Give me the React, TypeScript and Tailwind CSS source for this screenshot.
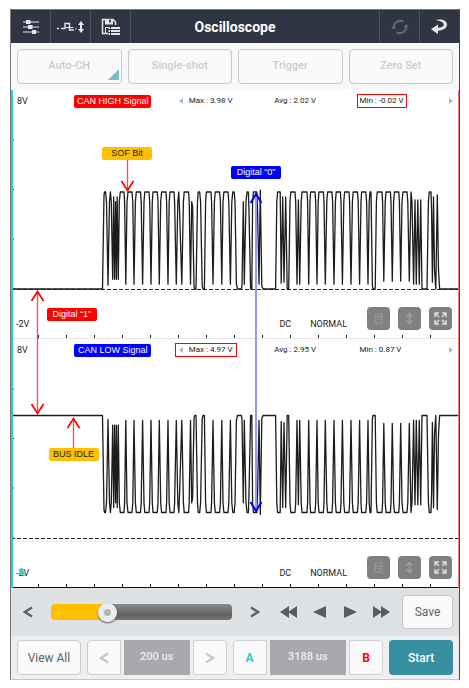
import { useState } from 'react'
import type { ReactNode } from 'react'

type Reading = { text: string; boxed?: boolean }

type Channel = {
  id: string
  name: string
  nameClass: string
  max: Reading
  avg: Reading
  min: Reading
  idleY: number
  swing: number
  marker?: string
}

const channels: Channel[] = [
  {
    id: 'high',
    name: 'CAN HIGH Signal',
    nameClass: 'bg-[#ff0000]',
    max: { text: 'Max : 3.98 V' },
    avg: { text: 'Avg : 2.02 V' },
    min: { text: 'Min : -0.02 V', boxed: true },
    idleY: 199,
    swing: -97,
  },
  {
    id: 'low',
    name: 'CAN LOW Signal',
    nameClass: 'bg-[#0000ff]',
    max: { text: 'Max : 4.97 V', boxed: true },
    avg: { text: 'Avg : 2.95 V' },
    min: { text: 'Min : 0.87 V' },
    idleY: 76.5,
    swing: 97,
    marker: 'A',
  },
]

// Bus frame as [x, level]; level 0 is recessive, 1 is dominant
const frame: [number, number][] = [
  [0, 0], [91.5, 0], [93, 0.97], [93.5, 1], [94.5, 1], [95.5, 0.9], [97, 0.04], [98.5, 0.9], [99.4, 1], [100.3, 0.9],
  [101.7, 0.1], [102.7, 0.95], [103.6, 0.1], [104.6, 0.9], [105.4, 0.1], [106.2, 0.95], [107.3, 0.1],
  [108.3, 0.9], [109.3, 1], [113, 1], [113.6, 0.9], [114.8, 0.05],
  [116, 0.9], [117, 1], [121, 1], [121.8, 0.9], [123, 0.05],
  [124.4, 0.9], [125.3, 1], [129.5, 1], [130.2, 0.9], [131.6, 0.05],
  [133, 0.9], [133.8, 1], [138, 1], [138.7, 0.9], [140, 0.05],
  [141.3, 0.9], [142, 1], [146.3, 1], [147, 0.9], [148.3, 0.05],
  [149.7, 0.9], [150.6, 1], [155, 1], [155.6, 0.9], [157, 0.05],
  [158.2, 0.9], [159, 1], [163, 1], [163.6, 0.9], [165.3, 0.05],
  [166.8, 0.9], [167.8, 1], [168.6, 0.8], [170.8, 0.05],
  [172.4, 0.9], [173.2, 1], [177.6, 1], [178.2, 0.9], [179.5, 0.05], [180.7, 0.9], [181.6, 0.85], [183, 0.03], [183.7, 0], [185, 0],
  [186.5, 0.9], [187.2, 1], [188.7, 1], [189.6, 0.9], [191.2, 0.03], [192, 0], [193.4, 0],
  [194.6, 0.9], [195.4, 1], [200, 1], [200.6, 0.9], [202, 0.05],
  [203.4, 0.9], [204.3, 1], [208.6, 1], [209.4, 0.9], [210.8, 0.05],
  [212, 0.9], [212.9, 1], [217, 1], [217.8, 0.9], [219.4, 0.05],
  [220.8, 0.9], [221.8, 1], [223.2, 1], [224, 0.9], [225.4, 0.05], [226.5, 0], [230.4, 0], [231, 0.04],
  [232.3, 0.9], [233.3, 0.05], [235, 0.9], [236, 1], [237.4, 1], [238, 0.8], [239.6, 0], [240.8, 0],
  [241.6, 0.9], [242.4, 1], [245.8, 1], [246.6, 0.8], [248, 0.05], [249.3, 1.02], [250.8, 0.03], [252, 0],
  [264.6, 0], [265.8, 0.9], [266.6, 1], [269.2, 1], [270.2, 0.06], [271.7, 0.95], [273, 0.07], [274.7, 0.95], [276.2, 0], [277.7, 0],
  [279, 0.9], [279.8, 1], [284, 1], [284.7, 0.9], [286, 0.05], [287.4, 0.92], [288.7, 0.05],
  [290.2, 0.9], [291, 1], [296, 1], [296.6, 0.9], [297.7, 0.05],
  [299, 0.9], [299.6, 1], [304, 1], [304.7, 0.9], [306, 0.05],
  [307.2, 0.9], [308, 1], [312.4, 1], [313, 0.9], [314.3, 0.05],
  [315.8, 0.9], [316.6, 1], [321, 1], [321.6, 0.9], [323, 0.05],
  [324.4, 0.9], [325.2, 1], [329.4, 1], [330, 0.9], [331.4, 0.05],
  [332.8, 0.9], [333.6, 1], [338, 1], [338.6, 0.9], [340, 0.05],
  [341.4, 0.9], [342.2, 1], [346.4, 1], [347.2, 0.9], [348.6, 0.05],
  [350, 0.9], [350.6, 1], [354.8, 1], [355.6, 0.9], [357, 0.05],
  [358.2, 0.9], [359, 1], [360, 1], [361.4, 0.03], [362, 0], [364.2, 0],
  [365.4, 0.9], [366.2, 1], [371, 1], [371.6, 0.9], [372.8, 0.08],
  [374.2, 0.9], [375, 1], [379.4, 1], [380, 0.9], [381.3, 0.08],
  [382.6, 0.9], [383.4, 1], [387.8, 1], [388.4, 0.9], [389.7, 0.08],
  [391, 0.9], [392, 1], [396, 1], [396.8, 0.9], [398.3, 0.08], [400, 1], [401, 0.9],
  [402.6, 0.05], [404, 0.92], [405.3, 0.05], [406.8, 0.92], [408.3, 0.05], [409.7, 0.92], [411, 0], [416, 0],
  [417.4, 0.9], [418.3, 1], [420, 1], [420.6, 0.8], [421.4, 0.07], [422.5, 0.95], [423.5, 0.2], [424.8, 0], [426.3, 0.97], [427.5, 0.2], [428.6, 0],
  [448, 0],
]

const timeTicks = Array.from({ length: 15 }, (_, i) => 27.5 + i * 28)

function tracePoints(ch: Channel) {
  return frame.map(([x, level]) => `${x},${(ch.idleY + level * ch.swing).toFixed(1)}`).join(' ')
}

function SettingsIcon() {
  return (
    <svg width="16" height="16" viewBox="0 0 16 16" fill="none" stroke="#e5e7e9">
      <path d="M0 3h16M0 8h16M0 13h16" strokeWidth="1.2" />
      <path d="M3 3h4.500M5 8h4.500M9 13h4" strokeWidth="3.800" />
    </svg>
  )
}

function WaveIcon() {
  return (
    <svg width="28" height="14" viewBox="0 0 28 14" fill="none" stroke="#e5e7e9">
      <path d="M0 8.500h2M4 8.500h4V3.500h4.500V10H17" strokeWidth="1.400" />
      <path d="M9 7.500h7.500M18 9h1.500" strokeWidth="1.200" />
      <path d="M24 3v8" strokeWidth="2" />
      <path d="M24 1l3 4h-6zM24 13l3-4h-6z" fill="#e5e7e9" stroke="none" />
    </svg>
  )
}

function SaveListIcon() {
  return (
    <svg width="20" height="18" viewBox="0 0 20 18" fill="none" stroke="#e5e7e9">
      <path d="M7 15.500H1.500V1.500h10.500l2.500 2.500V7" strokeWidth="1.500" />
      <path d="M4 1h8v5.500H4z" fill="#e5e7e9" stroke="none" />
      <path d="M9 1.500v3" stroke="#2f3542" strokeWidth="1.800" />
      <path d="M4.500 15V9.500h3" strokeWidth="1" />
      <path d="M7.500 10h1.500M7.500 13h1.500M7.500 16h1.500M10 10h9M10 13h9M10 16h9" strokeWidth="1.900" />
    </svg>
  )
}

function RefreshIcon() {
  return (
    <svg width="18" height="18" viewBox="0 0 18 18" fill="none" stroke="#646b76" strokeWidth="1.800">
      <path d="M2.800 9.500A6.300 6.300 0 0 1 12.500 3.800M15.200 8.500A6.300 6.300 0 0 1 5.500 14.200" />
      <path d="M0 8.500h5.600L2.800 12zM18 9.500h-5.600L15.200 6z" fill="#646b76" stroke="none" />
    </svg>
  )
}

function BackIcon() {
  return (
    <svg width="17" height="16" viewBox="0 0 17 16" fill="#e5e7e9">
      <path d="M4 1c7-1.600 12 .6 12 4.600 0 3.600-3.600 5.900-9 6.100V15L0 10.200 7 5.500v3.300c3.600-.2 5.700-1.200 5.700-3C12.700 3.300 9.500 1.700 4 1z" />
    </svg>
  )
}

function ChevronIcon({ right }: { right?: boolean }) {
  return (
    <svg width="10" height="12" viewBox="0 0 10 12" fill="none" stroke="currentColor" strokeWidth="2.400">
      <path d={right ? 'M1 1.500l7 4.500-7 4.500' : 'M9 1.500L2 6l7 4.500'} />
    </svg>
  )
}

function PlayIcon({ back, double }: { back?: boolean; double?: boolean }) {
  return (
    <svg width="17" height="12" viewBox="0 0 17 12" fill="#555d6b" className={back ? 'rotate-180' : ''}>
      <path d={double ? 'M0 0l9 6-9 6zM8 0l9 6-9 6z' : 'M2 0l13 6-13 6z'} />
    </svg>
  )
}

function HeaderButton({ label, children, side }: { label: string; children: ReactNode; side: 'left' | 'right' }) {
  return (
    <button
      aria-label={label}
      className={`flex h-full w-10 items-center justify-center border-[#4b515d] ${side === 'left' ? 'border-r' : 'border-l'}`}
    >
      {children}
    </button>
  )
}

function PlotButton({ label, children }: { label: string; children: ReactNode }) {
  return (
    <button aria-label={label} className="flex size-[23px] items-center justify-center rounded bg-[#808080]">
      <svg width="13" height="13" viewBox="0 0 13 13" fill="none">{children}</svg>
    </button>
  )
}

function ChannelView({ ch }: { ch: Channel }) {
  return (
    <section className="relative flex h-[249px] flex-col justify-between bg-white text-[#222]">
      <svg className="absolute inset-0 h-full w-full" viewBox="0 0 448 249" preserveAspectRatio="none" fill="none">
        {timeTicks.map((x) => (
          <path key={x} d={`M${x} 245v3`} stroke="#222" />
        ))}
        <path d="M0 50h3M0 99.500h3M0 149h3M0 199h3" stroke="#222" />
        <path d="M0 199.500H448" stroke="#222" strokeDasharray="4 2" />
        <polyline points={tracePoints(ch)} stroke="#1c1c1c" strokeWidth="1.3" strokeLinejoin="round" />
        <path d="M0 248.500H448" stroke={ch.id === 'low' ? '#111' : '#e4e4e4'} />
      </svg>

      {/* readings */}
      <div className="relative grid grid-cols-[57fr_100fr_93fr_88fr_92fr_8fr] items-center pt-1 pr-0.5 pl-1.5 text-[8px] leading-3">
        <span className="text-[9px]">8V</span>
        <span className={`w-[77px] rounded-xs text-center font-['Liberation_Sans',sans-serif] text-[9px] leading-[13px] text-white ${ch.nameClass}`}>
          {ch.name}
        </span>
        <span>
          <span className={`inline-flex items-center gap-1.5 border px-[3px] whitespace-nowrap ${ch.max.boxed ? 'border-[#ff0000]' : 'border-transparent'}`}>
            <svg width="4" height="6" viewBox="0 0 4 6" fill="#a9bcc6"><path d="M4 0v6L0 3z" /></svg>
            {ch.max.text}
          </span>
        </span>
        <span className="px-1.5 whitespace-nowrap">{ch.avg.text}</span>
        <span>
          <span className={`inline-block border px-[2px] whitespace-nowrap ${ch.min.boxed ? 'border-[#ff0000]' : 'border-transparent'}`}>
            {ch.min.text}
          </span>
        </span>
        <svg width="4" height="6" viewBox="0 0 4 6" fill="#a9bcc6"><path d="M0 0v6l4-3z" /></svg>
      </div>

      {/* coupling and view tools */}
      <div className="relative flex items-center pr-[7px] pb-2 pl-[5px] text-[9px]">
        <span className="relative pt-3">
          -2V
          {ch.marker && <b className="absolute bottom-0 left-0.5 text-[10px] font-black text-[#25cfcd]">{ch.marker}</b>}
        </span>
        <span className="mr-[19px] ml-auto pt-3">DC</span>
        <span className="mr-5 pt-3">NORMAL</span>
        <div className="flex gap-2">
          <PlotButton label="Copy">
            <path d="M3 2h7v9H3zM3 5h7M5.500 7.500h3" stroke="#9b9b9b" />
          </PlotButton>
          <PlotButton label="Scale">
            <path d="M6.500 2v9M3.500 4.500l3-3 3 3M3.500 8.500l3 3 3-3" stroke="#a0a0a0" strokeWidth="1.500" />
          </PlotButton>
          <PlotButton label="Expand">
            <path d="M1 5V1h4M1.500 1.500L5 5M8 1h4v4M11.500 1.500L8 5M1 8v4h4M1.500 11.500L5 8M12 8v4H8M11.500 11.500L8 8" stroke="#dedede" strokeWidth="1.400" />
          </PlotButton>
        </div>
      </div>
    </section>
  )
}

// Arrows and tags that explain the two traces
function Annotations() {
  const tag = "absolute rounded-xs text-center font-['Liberation_Sans',sans-serif] text-[9px] leading-[13px] whitespace-nowrap"
  return (
    <div className="pointer-events-none absolute inset-0">
      <svg className="absolute inset-0 h-full w-full" viewBox="0 0 448 498" preserveAspectRatio="none" fill="none">
        <path d="M116.500 70v31M26.500 201v123M62.500 329v30" stroke="#ff4a4a" strokeWidth="1.300" />
        <path d="M110.500 91l6 9.500 6-9.500M20.500 211l6-9.500 6 9.500M20.500 314l6 9.500 6-9.500M56.500 338l6-9.500 6 9.500" stroke="#ff0000" strokeWidth="1.700" />
        <path d="M245 104v316" stroke="#9696ff" strokeWidth="2" />
        <path d="M239.500 113l5.500-9 5.500 9M239.500 412l5.500 9 5.500-9" stroke="#0000ff" strokeWidth="2" />
      </svg>
      <span className={`${tag} top-[57px] left-[20.3%] w-[50px] bg-[#ffc000] text-[#222]`}>SOF Bit</span>
      <span className={`${tag} top-[76px] left-[49.1%] w-[50px] bg-[#0000ff] text-white`}>Digital “0”</span>
      <span className={`${tag} top-[218px] left-[8%] w-[50px] bg-[#ff0000] text-white`}>Digital “1”</span>
      <span className={`${tag} top-[358px] left-[8.4%] w-[50px] bg-[#ffc000] text-[#222]`}>BUS IDLE</span>
    </div>
  )
}

export default function App() {
  const [position, setPosition] = useState(29)
  const stepButton = 'flex w-[34px] items-center justify-center border border-[#cdced2] bg-[#fafafa]'

  return (
    <main className="min-h-screen bg-white pt-[9px] pr-[9px] pb-2 pl-2.5 font-[Roboto,sans-serif]">
      <div className="border-r border-b border-l border-r-[#444] border-b-[#c4c5c8] border-l-[#777] bg-[#f8f8f9]">
        <header className="grid h-[34px] grid-cols-[1fr_auto_1fr] items-center border-t border-[#777] bg-[#2f3542]">
          <div className="flex h-full">
            <HeaderButton label="Settings" side="left"><SettingsIcon /></HeaderButton>
            <HeaderButton label="Waveform" side="left"><WaveIcon /></HeaderButton>
            <HeaderButton label="Saved data" side="left"><SaveListIcon /></HeaderButton>
          </div>
          <h1 className="text-sm font-bold text-white">Oscilloscope</h1>
          <div className="flex h-full justify-end">
            <HeaderButton label="Refresh" side="right"><RefreshIcon /></HeaderButton>
            <HeaderButton label="Back" side="right"><BackIcon /></HeaderButton>
          </div>
        </header>

        <div className="grid grid-cols-4 gap-1.5 p-1.5">
          {['Auto-CH', 'Single-shot', 'Trigger', 'Zero Set'].map((label) => (
            <button
              key={label}
              className="relative h-[35px] rounded border border-[#c6c7cc] bg-[#fafafa] text-[11px] font-medium text-[#cacbcf]"
            >
              {label}
              {label === 'Auto-CH' && (
                <svg className="absolute right-0.5 bottom-[3px]" width="11" height="11" viewBox="0 0 11 11" fill="#73c0cb">
                  <path d="M11 0v11H0z" />
                </svg>
              )}
            </button>
          ))}
        </div>

        <div className="relative">
          {channels.map((ch) => (
            <ChannelView key={ch.id} ch={ch} />
          ))}
          <div className="absolute inset-y-0 left-0 w-0.5 bg-[#25cfcd]" />
          <div className="absolute inset-y-0 right-0 w-px bg-[#f07c7c]" />
          <Annotations />
        </div>

        {/* playback */}
        <div className="flex h-12 items-center bg-[#dfe2e5] pr-1.5 pl-3 text-[#626262]">
          <button aria-label="Previous"><ChevronIcon /></button>
          <input
            type="range"
            aria-label="Position"
            value={position}
            onChange={(e) => setPosition(Number(e.target.value))}
            className="ml-[18px] h-4 min-w-0 flex-1 appearance-none rounded-sm [&::-webkit-slider-thumb]:size-[19px] [&::-webkit-slider-thumb]:appearance-none [&::-webkit-slider-thumb]:rounded-full [&::-webkit-slider-thumb]:bg-[radial-gradient(circle,#b0b4b6_0_3px,#e9eff1_4px)] [&::-webkit-slider-thumb]:shadow-[0_1px_2px_#444]"
            style={{
              backgroundImage: `linear-gradient(to right, #ffc000 ${position}%, transparent ${position}%), linear-gradient(#8b8b8b, #606060 70%, #777)`,
            }}
          />
          <button aria-label="Next" className="ml-[18px]"><ChevronIcon right /></button>
          <div className="ml-5 flex gap-3.5">
            <button aria-label="Fast backward"><PlayIcon back double /></button>
            <button aria-label="Step backward"><PlayIcon back /></button>
            <button aria-label="Step forward"><PlayIcon /></button>
            <button aria-label="Fast forward"><PlayIcon double /></button>
          </div>
          <button className="ml-3 h-[34px] w-[51px] rounded border border-[#c3c5ca] bg-[#fafafa] text-xs text-[#5b606b]">Save</button>
        </div>

        {/* time base and cursors */}
        <div className="grid h-[43px] grid-cols-[64fr_140fr_151fr_64fr] gap-1.5 bg-[#efeff1] px-1.5 py-1 text-xs">
          <button className="rounded border border-[#c8cacf] bg-[#fafafa] text-[#5b606b]">View All</button>
          <div className="flex gap-[3px]">
            <button aria-label="Shorter time base" className={`${stepButton} rounded-l text-[#c7c8cb]`}><ChevronIcon /></button>
            <output className="flex flex-1 items-center justify-center bg-[#a8a9ae] text-[11px] font-medium text-[#ececef]">200 us</output>
            <button aria-label="Longer time base" className={`${stepButton} rounded-r text-[#c7c8cb]`}><ChevronIcon right /></button>
          </div>
          <div className="flex gap-[3px]">
            <button className={`${stepButton} rounded-l font-bold text-[#25cfcd]`}>A</button>
            <output className="flex flex-1 items-center justify-center bg-[#a8a9ae] text-[11px] font-medium text-[#ececef]">3188 us</output>
            <button className={`${stepButton} rounded-r font-bold text-[#ff0000]`}>B</button>
          </div>
          <button className="rounded bg-[#388fa2] font-medium text-white">Start</button>
        </div>
      </div>
    </main>
  )
}
